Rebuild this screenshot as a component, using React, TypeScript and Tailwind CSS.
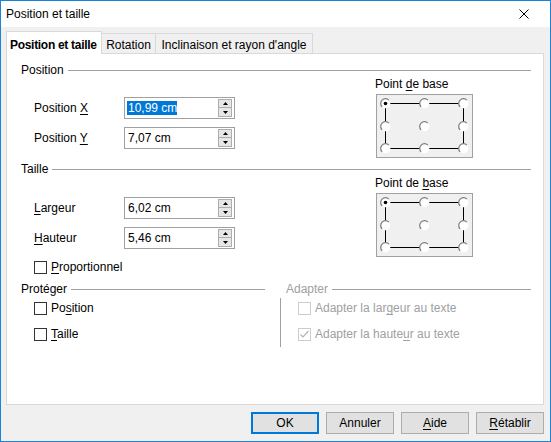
import React from "react";

const U = ({ children }: { children: React.ReactNode }) => (
  <span className="underline decoration-1 underline-offset-[2px]">{children}</span>
);

function Spin() {
  return (
    <div className="flex flex-col w-[14px] h-[18px]">
      <div className="h-[9px] border border-[#adadad] bg-[#e6e6e6] flex items-center justify-center">
        <svg width="5" height="3" viewBox="0 0 5 3" className="block">
          <path d="M2.5 0 L5 3 L0 3 Z" fill="#000" />
        </svg>
      </div>
      <div className="h-[9px] border border-t-0 border-[#adadad] bg-[#e6e6e6] flex items-center justify-center">
        <svg width="5" height="3" viewBox="0 0 5 3" className="block">
          <path d="M0 0 L5 0 L2.5 3 Z" fill="#000" />
        </svg>
      </div>
    </div>
  );
}

function Field({
  label,
  value,
  selected,
}: {
  label: React.ReactNode;
  value: string;
  selected?: boolean;
}) {
  return (
    <div className="flex items-center h-[22px]">
      <div className="w-[90px]">{label}</div>
      <div className="w-[111px] h-[22px] border border-[#a0a0a0] bg-white flex items-center justify-between pl-[2px] pr-[2px]">
        <span
          className={
            selected
              ? "bg-[#0078d7] text-white pl-[1px] leading-[14px]"
              : "pl-[1px] leading-[14px]"
          }
        >
          {value}
        </span>
        <Spin />
      </div>
    </div>
  );
}

function Header({
  children,
  disabled,
}: {
  children: React.ReactNode;
  disabled?: boolean;
}) {
  return (
    <div className="flex items-center h-[14px]">
      <span className={disabled ? "text-[#a0a0a0]" : "text-black"}>{children}</span>
      <div className="ml-[4px] h-px flex-1 bg-[#a0a0a0]" />
    </div>
  );
}

function Radio({ cx, cy, on }: { cx: number; cy: number; on?: boolean }) {
  const r = 4.8;
  const d = r * 0.7071;
  return (
    <g>
      <circle cx={cx} cy={cy} r={r} fill="#ffffff" />
      <path
        d={`M${cx - d} ${cy + d} A${r} ${r} 0 0 1 ${cx + d} ${cy - d}`}
        stroke="#7a7a7a"
        strokeWidth="1.2"
        fill="none"
      />
      {on && <circle cx={cx} cy={cy} r={1.8} fill="#000" />}
    </g>
  );
}

function BaseBox() {
  const xs = [8.5, 47.5, 86.5];
  const ys = [8.5, 31.5, 53.5];
  return (
    <div className="w-[97px] h-[64px] border border-[#a0a0a0] bg-[#f0f0f0]">
      <svg width="95" height="62" viewBox="0 0 95 62" className="block">
        <path d="M8.5 8.5 H86.5 V53.5 H8.5 Z" stroke="#000" strokeWidth="1" fill="none" />
        {ys.map((y, j) =>
          xs.map((x, i) => <Radio key={`${i}-${j}`} cx={x} cy={y} on={i === 0 && j === 0} />)
        )}
      </svg>
    </div>
  );
}

function Check({ checked, disabled }: { checked?: boolean; disabled?: boolean }) {
  return (
    <div
      className={
        disabled
          ? "w-[13px] h-[13px] border border-[#cccccc] bg-white flex items-center justify-center"
          : "w-[13px] h-[13px] border border-[#333333] bg-white flex items-center justify-center"
      }
    >
      {checked && (
        <svg width="11" height="11" viewBox="0 0 11 11" className="block">
          <path d="M1.5 5.5 L4 8 L9.5 2" stroke="#b5b5b5" strokeWidth="1.2" fill="none" />
        </svg>
      )}
    </div>
  );
}

function CheckRow({
  label,
  checked,
  disabled,
}: {
  label: React.ReactNode;
  checked?: boolean;
  disabled?: boolean;
}) {
  return (
    <div className="flex items-center h-[14px] gap-[4px]">
      <Check checked={checked} disabled={disabled} />
      <span className={disabled ? "text-[#a0a0a0]" : "text-black"}>{label}</span>
    </div>
  );
}

function PointDeBase({ label }: { label: React.ReactNode }) {
  return (
    <div className="ml-auto mr-[58px] w-[97px]">
      <div className="-ml-px whitespace-nowrap">{label}</div>
      <div className="mt-[3px]">
        <BaseBox />
      </div>
    </div>
  );
}

export default function App() {
  return (
    <div className="w-[551px] h-[442px] border border-[#1883d7] bg-[#f0f0f0] flex flex-col font-['Liberation_Sans',Arial,sans-serif] text-[12px] leading-[14px] text-black overflow-hidden">
      <div className="h-[26px] bg-white flex items-center pl-[5px] shrink-0">
        <span>Position et taille</span>
        <svg className="ml-auto mr-[21px] block" width="10" height="10" viewBox="0 0 10 10">
          <path d="M0.5 0.5 L9.5 9.5 M9.5 0.5 L0.5 9.5" stroke="#000" strokeWidth="1" />
        </svg>
      </div>
      <div className="flex-1 pt-[4px] pl-[5px] pr-[6px]">
        <div className="flex items-end h-[22px]">
          <div className="relative z-10 h-[23px] -mb-px w-[96px] bg-white border border-b-0 border-[#d9d9d9] pl-[3px] pt-[6px] font-bold tracking-[-0.3px] whitespace-nowrap">
            Position et taille
          </div>
          <div className="h-[20px] w-[54px] border border-l-0 border-b-0 border-[#d9d9d9] flex items-center justify-center pt-[2px]">
            Rotation
          </div>
          <div className="h-[20px] w-[157px] border border-l-0 border-b-0 border-[#d9d9d9] flex items-center justify-center pt-[2px] whitespace-nowrap">
            Inclinaison et rayon d'angle
          </div>
        </div>
        <div className="h-[352px] border border-[#d9d9d9] bg-white pl-[14px] pr-[12px] pt-[9px]">
          <Header>Position</Header>
          <div className="flex">
            <div className="pl-[13px] pt-[20px] flex flex-col gap-[8px]">
              <Field
                label={
                  <>
                    Position <U>X</U>
                  </>
                }
                value="10,99 cm"
                selected
              />
              <Field
                label={
                  <>
                    Position <U>Y</U>
                  </>
                }
                value="7,07 cm"
              />
            </div>
            <PointDeBase
              label={
                <>
                  Point <U>d</U>e base
                </>
              }
            />
          </div>

          <div className="mt-[4px]">
            <Header>Taille</Header>
          </div>
          <div className="flex">
            <div className="pl-[13px] pt-[21px] flex flex-col">
              <Field
                label={
                  <>
                    <U>L</U>argeur
                  </>
                }
                value="6,02 cm"
              />
              <div className="mt-[8px]">
                <Field
                  label={
                    <>
                      <U>H</U>auteur
                    </>
                  }
                  value="5,46 cm"
                />
              </div>
              <div className="mt-[11px]">
                <CheckRow
                  label={
                    <>
                      <U>P</U>roportionnel
                    </>
                  }
                />
              </div>
            </div>
            <PointDeBase
              label={
                <>
                  Point de <U>b</U>ase
                </>
              }
            />
          </div>

          <div className="flex mt-[8px]">
            <div className="w-[244px]">
              <Header>Protéger</Header>
              <div className="pl-[13px] pt-[5px] flex flex-col gap-[12px]">
                <CheckRow
                  label={
                    <>
                      Po<U>s</U>ition
                    </>
                  }
                />
                <CheckRow
                  label={
                    <>
                      <U>T</U>aille
                    </>
                  }
                />
              </div>
            </div>
            <div className="ml-[15px] flex-1">
              <div className="pl-[6px]">
                <Header disabled>Adapter</Header>
              </div>
              <div className="mt-[2px] border-l border-[#a0a0a0] pl-[17px] pt-[3px] pb-[6px] flex flex-col gap-[12px]">
                <CheckRow
                  disabled
                  label={
                    <>
                      Adapter la lar<U>g</U>eur au texte
                    </>
                  }
                />
                <CheckRow
                  disabled
                  checked
                  label={
                    <>
                      Adapter la haute<U>u</U>r au texte
                    </>
                  }
                />
              </div>
            </div>
          </div>
        </div>
        <div className="flex justify-end gap-[7px] mt-[7px]">
          <div className="w-[68px] h-[22px] border-2 border-[#0078d7] bg-[#e1e1e1] flex items-center justify-center">
            OK
          </div>
          <div className="w-[68px] h-[22px] border border-[#adadad] bg-[#e1e1e1] flex items-center justify-center">
            Annuler
          </div>
          <div className="w-[68px] h-[22px] border border-[#adadad] bg-[#e1e1e1] flex items-center justify-center">
            <span>
              <U>A</U>ide
            </span>
          </div>
          <div className="w-[68px] h-[22px] border border-[#adadad] bg-[#e1e1e1] flex items-center justify-center">
            <span>
              <U>R</U>établir
            </span>
          </div>
        </div>
      </div>
    </div>
  );
}
